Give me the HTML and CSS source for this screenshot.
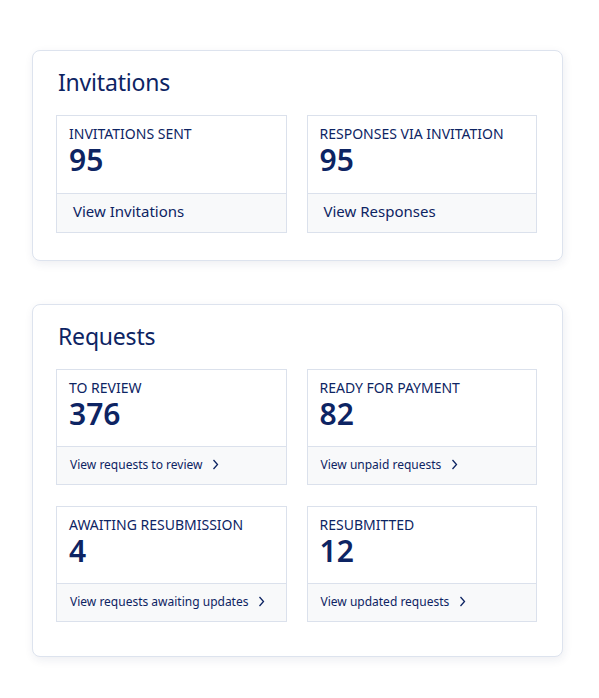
FILE: index.html
```html
<!DOCTYPE html>
<html lang="en">
<head>
<meta charset="UTF-8">
<meta name="viewport" content="width=device-width, initial-scale=1.0">
<title>Dashboard</title>
<link rel="stylesheet" href="styles.css">
</head>
<body>

<div class="page">
    <section class="panel">
        <h2 class="panel-title">Invitations</h2>
        <div class="tiles">
            <div class="tile tile-lg">
                <div class="tile-body">
                    <div class="tile-label">INVITATIONS SENT</div>
                    <div class="tile-count">95</div>
                </div>
                <a class="tile-foot" href="#">View Invitations</a>
            </div>
            <div class="tile tile-lg">
                <div class="tile-body">
                    <div class="tile-label">RESPONSES VIA INVITATION</div>
                    <div class="tile-count">95</div>
                </div>
                <a class="tile-foot" href="#">View Responses</a>
            </div>
        </div>
    </section>

    <section class="panel panel-tall">
        <h2 class="panel-title">Requests</h2>
        <div class="tiles">
            <div class="tile">
                <div class="tile-body">
                    <div class="tile-label">TO REVIEW</div>
                    <div class="tile-count">376</div>
                </div>
                <a class="tile-foot" href="#">View requests to review
                    <svg class="chev" width="7" height="11" viewBox="0 0 7 11"><path d="M1.5 1l4 4.5-4 4.5"/></svg>
                </a>
            </div>
            <div class="tile">
                <div class="tile-body">
                    <div class="tile-label">READY FOR PAYMENT</div>
                    <div class="tile-count">82</div>
                </div>
                <a class="tile-foot" href="#">View unpaid requests
                    <svg class="chev" width="7" height="11" viewBox="0 0 7 11"><path d="M1.5 1l4 4.5-4 4.5"/></svg>
                </a>
            </div>
            <div class="tile">
                <div class="tile-body">
                    <div class="tile-label">AWAITING RESUBMISSION</div>
                    <div class="tile-count">4</div>
                </div>
                <a class="tile-foot" href="#">View requests awaiting updates
                    <svg class="chev" width="7" height="11" viewBox="0 0 7 11"><path d="M1.5 1l4 4.5-4 4.5"/></svg>
                </a>
            </div>
            <div class="tile">
                <div class="tile-body">
                    <div class="tile-label">RESUBMITTED</div>
                    <div class="tile-count">12</div>
                </div>
                <a class="tile-foot" href="#">View updated requests
                    <svg class="chev" width="7" height="11" viewBox="0 0 7 11"><path d="M1.5 1l4 4.5-4 4.5"/></svg>
                </a>
            </div>
        </div>
    </section>
</div>

</body>
</html>
```

FILE: styles.css
```css
body {
    background-color: #ffffff;
    color: #0d2463;
    font-family: "Noto Sans", "Open Sans", sans-serif;
    margin: 0;
    padding: 0;
}

.page {
    padding: 50px 36px 40px 32px;
    display: flex;
    flex-direction: column;
    gap: 43px;
}

.panel {
    background-color: #fff;
    border: 1px solid #dde3ee;
    border-radius: 8px;
    box-shadow: 1px 3px 10px rgba(20, 40, 90, 0.08);
    padding: 15px 25px 27px 23px;
}

.panel-tall {
    padding-bottom: 34px;
}

.panel-title {
    font-size: 23px;
    font-weight: 400;
    letter-spacing: -0.2px;
    line-height: 32px;
    margin: 0 0 17px 2px;
}

.tiles {
    display: grid;
    grid-template-columns: 1fr 1fr;
    column-gap: 20px;
    row-gap: 21px;
}

.tile {
    border: 1px solid #dbe1ec;
    display: flex;
    flex-direction: column;
}

.tile-body {
    padding: 9px 12px 15px;
}

.tile-lg .tile-body {
    padding-bottom: 16px;
}

.tile-label {
    font-size: 14px;
    line-height: 18px;
}

.tile-count {
    font-size: 30px;
    font-weight: 600;
    line-height: 34px;
}

.tile-foot {
    display: flex;
    align-items: center;
    gap: 10px;
    padding: 0 0 2px 13px;
    box-sizing: border-box;
    height: 38px;
    border-top: 1px solid #dbe1ec;
    background-color: #f8f9fa;
    color: #0d2463;
    text-decoration: none;
    font-size: 12px;
}

.tile-lg .tile-foot {
    font-size: 15px;
    padding: 0 0 4px 16px;
    height: 39px;
}

.chev {
    fill: none;
    stroke: #0d2463;
    stroke-width: 1.3;
}
```
